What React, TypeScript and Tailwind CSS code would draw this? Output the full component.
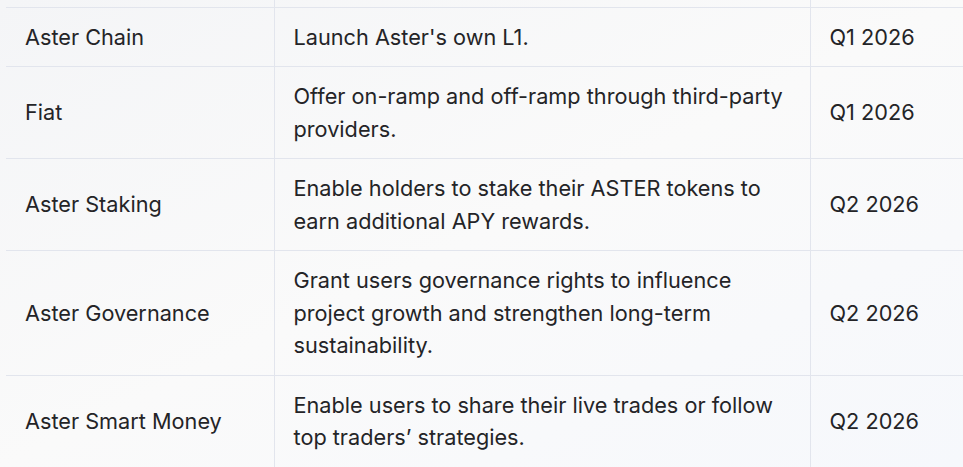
import React from "react";

const rows: { name: string; desc: React.ReactNode; when: string }[] = [
  { name: "Aster Chain", desc: "Launch Aster's own L1.", when: "Q1 2026" },
  {
    name: "Fiat",
    desc: (
      <>
        Offer on-ramp and off-ramp through third-party
        <br />
        providers.
      </>
    ),
    when: "Q1 2026",
  },
  {
    name: "Aster Staking",
    desc: (
      <>
        Enable holders to stake their ASTER tokens to
        <br />
        earn additional APY rewards.
      </>
    ),
    when: "Q2 2026",
  },
  {
    name: "Aster Governance",
    desc: (
      <>
        Grant users governance rights to influence
        <br />
        project growth and strengthen long-term
        <br />
        sustainability.
      </>
    ),
    when: "Q2 2026",
  },
  {
    name: "Aster Smart Money",
    desc: (
      <>
        Enable users to share their live trades or follow
        <br />
        top traders’ strategies.
      </>
    ),
    when: "Q2 2026",
  },
];

export default function App() {
  return (
    <div
      className="w-[963px] h-[467px] overflow-hidden bg-linear-to-br from-[#f4f5f7] via-[#fafafa] to-[#f6f8fc] text-[#242427]"
      style={{ fontFamily: "Inter, 'Noto Sans', sans-serif" }}
    >
      <table className="ml-[6px] w-[1000px] border-collapse table-fixed text-[21.7px] leading-[32.5px]">
        <colgroup>
          <col className="w-[268px]" />
          <col className="w-[536px]" />
          <col />
        </colgroup>
        <tbody>
          <tr className="h-[7px] border-b border-[#e2e5ed]">
            <td className="p-0" />
            <td className="p-0 border-l border-[#e2e5ed]" />
            <td className="p-0 border-l border-[#e2e5ed]" />
          </tr>
          {rows.map((r) => (
            <tr key={r.name} className="border-b border-[#e2e5ed]">
              <td className="pl-[19px] pr-4 py-[13px] align-middle">{r.name}</td>
              <td className="pl-[19px] pr-4 py-[13px] align-middle border-l border-[#e2e5ed]">
                {r.desc}
              </td>
              <td className="pl-[19px] pr-4 py-[13px] align-middle border-l border-[#e2e5ed]">
                {r.when}
              </td>
            </tr>
          ))}
        </tbody>
      </table>
    </div>
  );
}
